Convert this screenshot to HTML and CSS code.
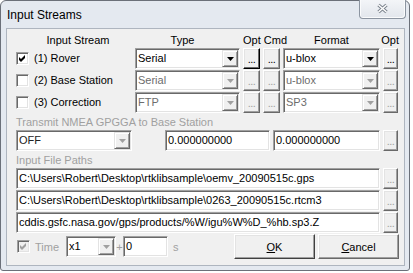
FILE: index.html
```html
<!DOCTYPE html>
<html>
<head>
  <title>Input Streams</title>
  <link rel="stylesheet" href="styles.css">
</head>
<body>
  <div class="window">
    <div class="titlebar">
      <span class="title">Input Streams</span>
      <div class="close-btn">
        <svg width="13" height="11" viewBox="0 0 13 11">
          <path d="M2.5 2 10.5 9M10.5 2 2.5 9" stroke="#7b838d" stroke-width="3.4"/>
          <path d="M2.5 2 10.5 9M10.5 2 2.5 9" stroke="#fff" stroke-width="1.5"/>
        </svg>
      </div>
    </div>

    <div class="client">
      <div class="streams">
        <div class="col-head stream-head">Input Stream</div>
        <div class="col-head type-head">Type</div>
        <div class="col-head optcmd-head">Opt Cmd</div>
        <div class="col-head">Format</div>
        <div class="col-head opt-head">Opt</div>

        <label class="stream">
          <span class="checkbox"><svg width="9" height="9" viewBox="0 0 9 9"><path d="M1 3 3 5 7 1 7 4 3 8 1 6Z" fill="#000"/></svg></span>
          (1) Rover
        </label>
        <div class="combo"><span class="combo-text">Serial</span><span class="drop"><svg width="7" height="4" viewBox="0 0 7 4"><path d="M0 0H7L3.5 4Z" fill="#000"/></svg></span></div>
        <button class="btn-dots focused">...</button>
        <button class="btn-dots">...</button>
        <div class="combo"><span class="combo-text">u-blox</span><span class="drop"><svg width="7" height="4" viewBox="0 0 7 4"><path d="M0 0H7L3.5 4Z" fill="#000"/></svg></span></div>
        <button class="btn-dots">...</button>

        <label class="stream">
          <span class="checkbox"></span>
          (2) Base Station
        </label>
        <div class="combo disabled"><span class="combo-text">Serial</span><span class="drop"><svg width="7" height="4" viewBox="0 0 7 4"><path d="M0 0H7L3.5 4Z" fill="#a0a0a0"/></svg></span></div>
        <button class="btn-dots disabled">...</button>
        <button class="btn-dots disabled">...</button>
        <div class="combo disabled"><span class="combo-text">u-blox</span><span class="drop"><svg width="7" height="4" viewBox="0 0 7 4"><path d="M0 0H7L3.5 4Z" fill="#a0a0a0"/></svg></span></div>
        <button class="btn-dots disabled">...</button>

        <label class="stream">
          <span class="checkbox"></span>
          (3) Correction
        </label>
        <div class="combo disabled"><span class="combo-text">FTP</span><span class="drop"><svg width="7" height="4" viewBox="0 0 7 4"><path d="M0 0H7L3.5 4Z" fill="#a0a0a0"/></svg></span></div>
        <button class="btn-dots disabled">...</button>
        <button class="btn-dots disabled">...</button>
        <div class="combo disabled"><span class="combo-text">SP3</span><span class="drop"><svg width="7" height="4" viewBox="0 0 7 4"><path d="M0 0H7L3.5 4Z" fill="#a0a0a0"/></svg></span></div>
        <button class="btn-dots disabled">...</button>
      </div>

      <div class="group-label">Transmit NMEA GPGGA to Base Station</div>
      <div class="nmea-row">
        <div class="combo nmea-combo"><span class="combo-text">OFF</span><span class="drop"><svg width="7" height="4" viewBox="0 0 7 4"><path d="M0 0H7L3.5 4Z" fill="#a0a0a0"/></svg></span></div>
        <div class="field lat">0.000000000</div>
        <div class="field lon">0.000000000</div>
        <button class="btn-dots disabled">...</button>
      </div>

      <div class="group-label">Input File Paths</div>
      <div class="path-row">
        <div class="field path">C:\Users\Robert\Desktop\rtklibsample\oemv_20090515c.gps</div>
        <button class="btn-dots disabled">...</button>
      </div>
      <div class="path-row">
        <div class="field path">C:\Users\Robert\Desktop\rtklibsample\0263_20090515c.rtcm3</div>
        <button class="btn-dots disabled">...</button>
      </div>
      <div class="path-row">
        <div class="field path">cddis.gsfc.nasa.gov/gps/products/%W/igu%W%D_%hb.sp3.Z</div>
        <button class="btn-dots disabled">...</button>
      </div>

      <div class="bottom-row">
        <span class="checkbox disabled"><svg width="9" height="9" viewBox="0 0 9 9"><path d="M1 3 3 5 7 1 7 4 3 8 1 6Z" fill="#a0a0a0"/></svg></span>
        <span class="dim time-label">Time</span>
        <div class="combo speed"><span class="combo-text">x1</span><span class="drop"><svg width="7" height="4" viewBox="0 0 7 4"><path d="M0 0H7L3.5 4Z" fill="#a0a0a0"/></svg></span></div>
        <span class="dim plus">+</span>
        <div class="field offset">0</div>
        <span class="dim unit">s</span>
        <button class="btn default"><u>O</u>K</button>
        <button class="btn"><u>C</u>ancel</button>
      </div>
    </div>
  </div>
</body>
</html>
```

FILE: styles.css
```css
body {
  margin: 0;
  background: #fff;
  font-family: "Liberation Sans", Arial, sans-serif;
  font-size: 11px;
  color: #000;
}

.window {
  width: 410px;
  height: 271px;
  box-sizing: border-box;
  border: 1px solid #6b7079;
  border-radius: 6px 6px 3px 3px;
  background: #e4e9f0;
  padding: 0 4px 4px 5px;
  display: flex;
  flex-direction: column;
}

.titlebar {
  height: 27px;
  display: flex;
  justify-content: space-between;
  align-items: flex-start;
}

.title {
  font-size: 12px;
  line-height: 15px;
  padding: 7px 0 0 1px;
}

.close-btn {
  width: 47px;
  height: 19px;
  box-sizing: border-box;
  margin: -1px -1px 0 0;
  border: 1px solid #8c95a1;
  border-top: none;
  border-radius: 0 0 4px 4px;
  background: linear-gradient(#f3f5f8, #e2e6ec);
  box-shadow: inset 1px 0 #fafbfc, inset -1px -1px #fafbfc;
  display: flex;
  justify-content: center;
  align-items: center;
  padding-bottom: 1px;
}

.client {
  height: 236px;
  border: 1px solid #aeb5bf;
  background: #f0f0f0;
  padding: 4px 5px 0 9px;
}

/* stream table */
.streams {
  display: grid;
  grid-template-columns: 116px 105px 17px 17px 97px 15px;
  grid-template-rows: 14px 21px 21px 21px;
  column-gap: 3px;
  row-gap: 1px;
}

.col-head {
  line-height: 14px;
  text-align: center;
  white-space: nowrap;
}

.stream-head {
  padding-left: 8px;
}

.type-head {
  padding-right: 10px;
}

.optcmd-head {
  grid-column: span 2;
}

.opt-head {
  justify-self: end;
  margin-right: -1px;
}

.stream {
  display: flex;
  align-items: center;
  gap: 5px;
  white-space: nowrap;
}

.checkbox {
  width: 13px;
  height: 13px;
  box-sizing: border-box;
  border: 1px solid;
  border-color: #a0a0a0 #fff #fff #a0a0a0;
  box-shadow: inset 1px 1px #696969, inset -1px -1px #e3e3e3;
  background: #fff;
  padding: 1px;
  display: flex;
  flex-shrink: 0;
}

.checkbox.disabled {
  background: #f0f0f0;
}

/* sunken controls */
.combo,
.field {
  height: 21px;
  box-sizing: border-box;
  border: 1px solid;
  border-color: #a0a0a0 #fff #fff #a0a0a0;
  box-shadow: inset 1px 1px #696969, inset -1px -1px #e3e3e3;
  background: #fff;
  padding: 1px;
}

.combo {
  display: flex;
}

.combo-text {
  flex: 1;
  line-height: 17px;
  padding-left: 1px;
  overflow: hidden;
  white-space: nowrap;
}

.combo.disabled .combo-text {
  color: #6d6d6d;
}

.drop {
  width: 16px;
  height: 17px;
  box-sizing: border-box;
  border: 1px solid;
  border-color: #e3e3e3 #696969 #696969 #e3e3e3;
  box-shadow: inset 1px 1px #fff, inset -1px -1px #a0a0a0;
  background: #f0f0f0;
  display: flex;
  justify-content: center;
  align-items: center;
  padding-top: 1px;
}

.field {
  line-height: 17px;
  padding-left: 2px;
  white-space: nowrap;
  overflow: hidden;
}

/* raised buttons */
.btn-dots,
.btn {
  font-family: inherit;
  font-size: 11px;
  color: #000;
  margin: 0;
  padding: 0;
  box-sizing: border-box;
  border: 1px solid;
  border-color: #fff #696969 #696969 #fff;
  box-shadow: inset -1px -1px #a0a0a0, inset 1px 1px #e3e3e3;
  background: #f0f0f0;
}

.btn-dots {
  height: 21px;
  line-height: 17px;
  padding-top: 2px;
  letter-spacing: -0.5px;
}

.btn-dots.focused {
  border-color: #fff #000 #000 #fff;
  box-shadow: inset -1px -1px #696969, inset 1px 1px #e3e3e3;
}

.btn-dots.disabled {
  color: #a0a0a0;
}

.group-label {
  color: #a0a0a0;
  line-height: 15px;
  margin-top: 2px;
}

.nmea-row,
.path-row {
  display: flex;
  gap: 3px;
}

.nmea-row .btn-dots,
.path-row .btn-dots {
  width: 15px;
}

.nmea-combo {
  width: 116px;
}

.nmea-combo .combo-text {
  color: #222;
}

.lat {
  width: 105px;
  margin-left: 30px;
}

.lon {
  width: 107px;
}

.path-row {
  margin-bottom: 1px;
}

.path {
  width: 364px;
}

.bottom-row {
  height: 26px;
  display: flex;
  align-items: center;
  padding-left: 1px;
}

.dim {
  color: #a0a0a0;
}

.time-label {
  margin-left: 5px;
}

.speed {
  width: 50px;
  margin-left: 7px;
}

.plus {
  width: 7px;
  text-align: center;
}

.offset {
  width: 45px;
}

.unit {
  margin-left: 5px;
}

.btn {
  width: 81px;
  height: 25px;
}

.btn.default {
  margin-left: auto;
  margin-right: 3px;
  border-color: #fff #404040 #404040 #fff;
}
```
